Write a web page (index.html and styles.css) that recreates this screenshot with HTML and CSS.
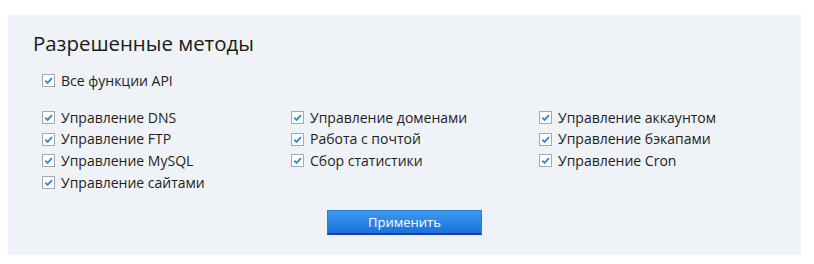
FILE: index.html
```html
<!DOCTYPE html>
<html lang="ru">
<head>
    <meta charset="UTF-8">
    <title>Разрешенные методы</title>
    <link rel="stylesheet" href="styles.css">
</head>
<body>
    <div class="panel">
        <h2 class="panel-title">Разрешенные методы</h2>

        <label class="check all">
            <input type="checkbox" checked>
            <span class="box"><svg viewBox="0 0 12 12"><path d="M2.5 6.2 L5 8.6 L9.8 3.4" /></svg></span>
            Все функции API
        </label>

        <div class="methods">
            <label class="check"><input type="checkbox" checked><span class="box"><svg viewBox="0 0 12 12"><path d="M2.5 6.2 L5 8.6 L9.8 3.4" /></svg></span>Управление DNS</label>
            <label class="check"><input type="checkbox" checked><span class="box"><svg viewBox="0 0 12 12"><path d="M2.5 6.2 L5 8.6 L9.8 3.4" /></svg></span>Управление доменами</label>
            <label class="check"><input type="checkbox" checked><span class="box"><svg viewBox="0 0 12 12"><path d="M2.5 6.2 L5 8.6 L9.8 3.4" /></svg></span>Управление аккаунтом</label>
            <label class="check"><input type="checkbox" checked><span class="box"><svg viewBox="0 0 12 12"><path d="M2.5 6.2 L5 8.6 L9.8 3.4" /></svg></span>Управление FTP</label>
            <label class="check"><input type="checkbox" checked><span class="box"><svg viewBox="0 0 12 12"><path d="M2.5 6.2 L5 8.6 L9.8 3.4" /></svg></span>Работа с почтой</label>
            <label class="check"><input type="checkbox" checked><span class="box"><svg viewBox="0 0 12 12"><path d="M2.5 6.2 L5 8.6 L9.8 3.4" /></svg></span>Управление бэкапами</label>
            <label class="check"><input type="checkbox" checked><span class="box"><svg viewBox="0 0 12 12"><path d="M2.5 6.2 L5 8.6 L9.8 3.4" /></svg></span>Управление MySQL</label>
            <label class="check"><input type="checkbox" checked><span class="box"><svg viewBox="0 0 12 12"><path d="M2.5 6.2 L5 8.6 L9.8 3.4" /></svg></span>Сбор статистики</label>
            <label class="check"><input type="checkbox" checked><span class="box"><svg viewBox="0 0 12 12"><path d="M2.5 6.2 L5 8.6 L9.8 3.4" /></svg></span>Управление Cron</label>
            <label class="check"><input type="checkbox" checked><span class="box"><svg viewBox="0 0 12 12"><path d="M2.5 6.2 L5 8.6 L9.8 3.4" /></svg></span>Управление сайтами</label>
        </div>

        <div class="actions">
            <button type="button" class="apply-button">Применить</button>
        </div>
    </div>
</body>
</html>
```

FILE: styles.css
```css
body {
    font-family: "Open Sans", "Noto Sans", sans-serif;
    margin: 0;
    padding: 15px 13px 9px 8px;
    background-color: #ffffff;
    color: #1e1e1e;
}

.panel {
    background-color: #eff2f6;
    padding: 14px 25px 20px 25px;
    height: 206px;
}

.panel-title {
    margin: 0 0 13px 0;
    font-size: 20.4px;
    font-weight: normal;
    line-height: 28px;
    color: #1a1a1a;
}

.check {
    display: flex;
    align-items: center;
    font-size: 14px;
    line-height: 21.7px;
    cursor: pointer;
}

.check input {
    display: none;
}

.box {
    width: 11px;
    height: 11px;
    border: 1px solid #a4a9ae;
    background-color: #ffffff;
    margin: 0 6px 0 9px;
    display: flex;
    align-items: center;
    justify-content: center;
}

.box svg {
    width: 11px;
    height: 11px;
}

.box path {
    fill: none;
    stroke: #2d8ad6;
    stroke-width: 2;
}

.all {
    margin-bottom: 15px;
}

.methods {
    display: grid;
    grid-template-columns: 249px 248px 1fr;
}

.actions {
    display: flex;
    justify-content: center;
    margin-top: 16px;
}

.apply-button {
    width: 155px;
    height: 25px;
    padding: 0;
    border: 1px solid #2a7fd4;
    border-bottom: 2px solid #1e3fae;
    background: linear-gradient(#3c9bef, #1a70dc);
    color: #ffffff;
    font-family: inherit;
    font-size: 13px;
    cursor: pointer;
}

.apply-button:hover {
    background: linear-gradient(#2f8fe6, #1463c9);
}
```
